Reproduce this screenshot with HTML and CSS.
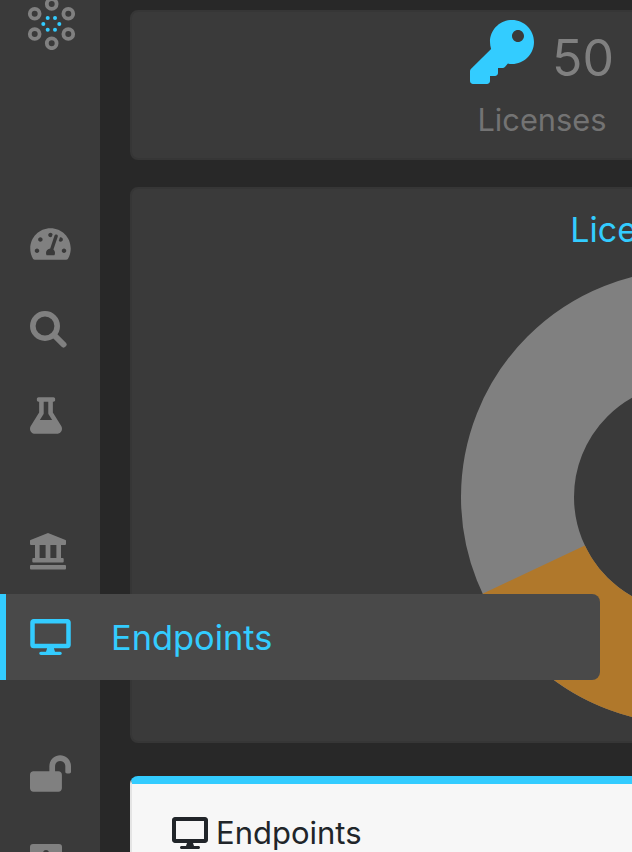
FILE: index.html
```html
<!DOCTYPE html>
<html lang="en">
<head>
<meta charset="utf-8">
<title>Endpoints</title>
<link rel="stylesheet" href="styles.css">
</head>
<body>
<div class="shell">
  <nav class="sidebar">
    <svg class="logo" viewBox="0 0 50 50" aria-hidden="true">
      <g class="logo-rings">
        <circle cx="25.7" cy="4" r="4.9"/><circle cx="8.7" cy="13.7" r="4.9"/><circle cx="42.3" cy="13.7" r="4.9"/>
        <circle cx="8.7" cy="34" r="4.9"/><circle cx="42.3" cy="34" r="4.9"/><circle cx="25.7" cy="43.3" r="4.9"/>
      </g>
      <g class="logo-dots">
        <circle cx="21.7" cy="18" r="2"/><circle cx="29" cy="18" r="2"/><circle cx="17.3" cy="24" r="2"/>
        <circle cx="33.3" cy="24" r="2"/><circle cx="21.7" cy="29.7" r="2"/><circle cx="29" cy="29.7" r="2"/>
      </g>
    </svg>
    <svg class="nav-icon icon-gauge" viewBox="0 0 576 512"><path d="M288 32C128.94 32 0 160.94 0 320c0 52.8 14.25 102.26 39.06 144.8 5.61 9.62 16.3 15.2 27.44 15.2h443c11.14 0 21.83-5.58 27.44-15.2C561.75 422.26 576 372.8 576 320c0-159.06-128.94-288-288-288zm0 64c14.71 0 26.58 10.13 30.32 23.65-1.11 2.26-2.64 4.23-3.45 6.67l-9.22 27.67c-5.13 3.49-10.97 6.01-17.64 6.01-17.67 0-32-14.33-32-32S270.33 96 288 96zM96 384c-17.67 0-32-14.33-32-32s14.33-32 32-32 32 14.33 32 32-14.33 32-32 32zm48-160c-17.67 0-32-14.33-32-32s14.33-32 32-32 32 14.33 32 32-14.33 32-32 32zm246.77-72.41l-61.33 184C343.13 347.33 352 364.54 352 384c0 11.72-3.38 22.55-8.88 32H232.88c-5.5-9.45-8.88-20.28-8.88-32 0-33.94 26.5-61.43 59.9-63.59l61.34-184.01c4.17-12.56 17.73-19.45 30.36-15.17 12.57 4.19 19.35 17.79 15.17 30.36zm14.66 57.2l15.52-46.55c3.47-1.29 7.13-2.23 11.05-2.23 17.67 0 32 14.33 32 32s-14.33 32-32 32c-11.38-.01-20.89-6.28-26.57-15.22zM480 384c-17.67 0-32-14.33-32-32s14.33-32 32-32 32 14.33 32 32-14.33 32-32 32z"/></svg>
    <svg class="nav-icon icon-search" viewBox="0 0 37 37"><circle cx="15" cy="15" r="12.2"/><path class="search-handle" d="M25 25l8.5 8.5"/></svg>
    <svg class="nav-icon icon-flask" viewBox="0 0 448 512"><path d="M437.2 403.5L320 215V64h8c13.3 0 24-10.7 24-24V24c0-13.3-10.7-24-24-24H120c-13.3 0-24 10.7-24 24v16c0 13.3 10.7 24 24 24h8v151L10.8 403.5C-18.5 450.6 15.3 512 70.9 512h306.2c55.7 0 89.4-61.5 60.1-108.5zM137.9 320l48.2-77.6c3.7-5.2 5.8-11.6 5.8-18.4V64h64v160c0 6.9 2.2 13.2 5.8 18.4l48.2 77.6h-172z"/></svg>
    <svg class="nav-icon icon-bank" viewBox="0 0 36 37"><path d="M18 0L35.5 7q.5.2.5 1v3q0 1-1 1H1q-1 0-1-1V8q0-.8.5-1z"/><rect x="5" y="12" width="4.6" height="13"/><rect x="15.6" y="12" width="4.8" height="13"/><rect x="26.4" y="12" width="4.6" height="13"/><rect x="2.3" y="25" width="31.4" height="4.4" rx="1"/><rect x="0" y="32" width="36" height="4.6" rx="1"/></svg>
    <div class="nav-gap"></div>
    <svg class="nav-icon icon-unlock" viewBox="0 0 576 512"><path d="M423.5 0C339.5.3 272 69.5 272 153.5V224H48c-26.5 0-48 21.5-48 48v192c0 26.5 21.5 48 48 48h352c26.5 0 48-21.5 48-48V272c0-26.5-21.5-48-48-48h-48v-71.1c0-39.6 31.7-72.5 71.3-72.9 40-.4 72.7 32.1 72.7 72v80c0 13.3 10.7 24 24 24h32c13.3 0 24-10.7 24-24v-80C576 68 507.5-.3 423.5 0z"/></svg>
    <div class="nav-last"></div>
  </nav>

  <main class="content">
    <section class="card stat-card">
      <div class="stat">
        <div class="stat-row">
          <svg class="stat-key" viewBox="0 0 512 512"><path d="M512 176.001C512 273.203 433.202 352 336 352c-11.22 0-22.19-1.062-32.827-3.069l-24.012 27.014A23.999 23.999 0 0 1 261.223 384H224v40c0 13.255-10.745 24-24 24h-40v40c0 13.255-10.745 24-24 24H24c-13.255 0-24-10.745-24-24v-78.059c0-6.365 2.529-12.47 7.029-16.971l161.802-161.802C163.108 213.814 160 195.271 160 176 160 78.798 238.797.001 335.999 0 433.488-.001 512 78.511 512 176.001zM336 128c0 26.51 21.49 48 48 48s48-21.49 48-48-21.49-48-48-48-48 21.49-48 48z"/></svg>
          <span class="stat-value">50</span>
        </div>
        <div class="stat-label">Licenses</div>
      </div>
    </section>

    <section class="card chart-card">
      <h2 class="chart-title">License Status</h2>
      <svg class="donut" viewBox="0 0 454 454">
        <circle class="donut-gray" cx="227" cy="227" r="170.5"/>
        <circle class="donut-orange" cx="227" cy="227" r="170.5" pathLength="100" stroke-dasharray="40 60" transform="rotate(10.8 227 227)"/>
      </svg>
    </section>

    <section class="panel">
      <h1 class="panel-title">
        <svg class="panel-icon" viewBox="0 0 576 512"><path d="M528 0H48C21.5 0 0 21.5 0 48v320c0 26.5 21.5 48 48 48h192l-16 48h-72c-13.3 0-24 10.7-24 24s10.7 24 24 24h272c13.3 0 24-10.7 24-24s-10.7-24-24-24h-72l-16-48h192c26.5 0 48-21.5 48-48V48c0-26.5-21.5-48-48-48zm-16 352H64V64h448v288z"/></svg>
        <span>Endpoints</span>
      </h1>
    </section>
  </main>

  <a class="flyout" href="#">
    <svg class="flyout-icon" viewBox="0 0 576 512"><path d="M528 0H48C21.5 0 0 21.5 0 48v320c0 26.5 21.5 48 48 48h192l-16 48h-72c-13.3 0-24 10.7-24 24s10.7 24 24 24h272c13.3 0 24-10.7 24-24s-10.7-24-24-24h-72l-16-48h192c26.5 0 48-21.5 48-48V48c0-26.5-21.5-48-48-48zm-16 352H64V64h448v288z"/></svg>
    <span>Endpoints</span>
  </a>
</div>
</body>
</html>
```

FILE: styles.css
```css
* { box-sizing: border-box; }
html, body { margin: 0; height: 100%; overflow: hidden; background: #282828; }
body { font-family: Inter, "Liberation Sans", sans-serif; }

.shell { position: relative; display: flex; width: 632px; height: 852px; overflow: hidden; }

.sidebar {
  flex: 0 0 100px;
  height: 852px;
  display: flex;
  flex-direction: column;
  align-items: flex-start;
  padding-left: 30px;
  background: #3a3a3a;
  overflow: hidden;
}
.logo { display: block; width: 50px; height: 50px; margin: 0 0 0 -4px; flex: none; }
.logo-rings circle { fill: none; stroke: #808080; stroke-width: 3.8; }
.logo-dots circle { fill: #33ccff; }

.nav-icon { display: block; flex: none; fill: #808080; }
.icon-gauge { width: 41px; height: 36px; margin-top: 176px; }
.icon-search { width: 37px; height: 37px; margin-top: 49px; fill: none; stroke: #808080; stroke-width: 5.6; }
.search-handle { stroke-width: 6; stroke-linecap: round; }
.icon-flask { width: 32px; height: 37px; margin-top: 49px; }
.icon-bank { width: 36px; height: 37px; margin-top: 99px; }
.nav-gap { flex: none; height: 185px; }
.icon-unlock { width: 41px; height: 37px; }
.nav-last { position: relative; flex: none; width: 32px; height: 30px; margin-top: 52px; background: #808080; border-radius: 3px; }
.nav-last::after { content: ""; position: absolute; left: 13px; top: 6px; width: 6px; height: 6px; border-radius: 50%; background: #3a3a3a; }

.content { flex: none; width: 1000px; padding: 10px 0 0 30px; }

.card {
  background: #3a3a3a;
  border: 2px solid #363636;
  border-radius: 8px;
}
.stat-card { height: 150px; display: flex; }
.stat { width: 820px; display: flex; flex-direction: column; align-items: center; padding-top: 8px; }
.stat-row { display: flex; align-items: center; gap: 18px; }
.stat-key { display: block; width: 64px; height: 64px; fill: #33ccff; }
.stat-value { margin-top: 12px; font-size: 50px; line-height: 52px; color: #808080; }
.stat-label { margin-top: 16px; font-size: 30.8px; line-height: 40px; color: #737373; }

.chart-card {
  height: 556px;
  margin-top: 27px;
  display: flex;
  flex-direction: column;
  align-items: center;
  width: 1116px;
  padding-top: 19px;
}
.chart-title { margin: 0; font-size: 34px; line-height: 44px; font-weight: 400; color: #33ccff; white-space: nowrap; }
.donut { display: block; width: 454px; height: 454px; margin-top: 18px; flex: none; }
.donut circle { fill: none; stroke-width: 113; }
.donut-gray { stroke: #808080; }
.donut-orange { stroke: #b0782b; }

.panel {
  width: 1000px;
  height: 200px;
  margin-top: 33px;
  background: #f7f7f7;
  border-top: 8px solid #33ccff;
  border-left: 2px solid #e4e4e4;
  border-radius: 8px 0 0 0;
  padding: 31px 0 0 40px;
}
.panel-title { display: flex; align-items: center; gap: 8px; margin: 0; font-size: 31px; line-height: 36px; font-weight: 400; color: #212529; }
.panel-icon { display: block; width: 36px; height: 32px; fill: #212529; }

.flyout {
  position: absolute;
  left: 0;
  top: 594px;
  width: 600px;
  height: 86px;
  display: flex;
  align-items: center;
  gap: 40px;
  padding-left: 24px;
  background: #494949;
  border-left: 6px solid #33ccff;
  border-radius: 0 8px 8px 0;
  color: #33ccff;
  font-size: 34.4px;
  text-decoration: none;
}
.flyout-icon { display: block; width: 41px; height: 36px; fill: #33ccff; }
```
